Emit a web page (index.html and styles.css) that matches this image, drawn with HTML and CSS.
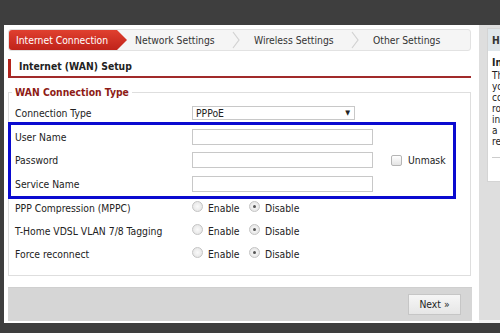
FILE: index.html
```html
<!DOCTYPE html>
<html lang="en">
<head>
<meta charset="UTF-8">
<title>Internet Connection</title>
<link rel="stylesheet" href="styles.css">
</head>
<body>
  <div class="window">
    <div class="main">
      <div class="steps">
        <span class="step active">Internet Connection</span>
        <span class="step">Network Settings</span>
        <svg class="chev" width="10" height="20" viewBox="0 0 10 20"><polyline points="2,2 8,10 2,18" fill="none" stroke="#d2d2d2" stroke-width="1.2"/></svg>
        <span class="step">Wireless Settings</span>
        <svg class="chev" width="10" height="20" viewBox="0 0 10 20"><polyline points="2,2 8,10 2,18" fill="none" stroke="#d2d2d2" stroke-width="1.2"/></svg>
        <span class="step">Other Settings</span>
      </div>

      <h2 class="section-title">Internet (WAN) Setup</h2>

      <fieldset class="wan">
        <legend>WAN Connection Type</legend>
        <div class="row first">
          <label>Connection Type</label>
          <div class="select">PPPoE <span class="arrow">&#9660;</span></div>
        </div>
        <div class="highlight">
          <div class="row">
            <label>User Name</label>
            <input type="text">
          </div>
          <div class="row">
            <label>Password</label>
            <input type="text">
            <span class="check"><span class="box"></span>Unmask</span>
          </div>
          <div class="row">
            <label>Service Name</label>
            <input type="text">
          </div>
        </div>
        <div class="row after">
          <label>PPP Compression (MPPC)</label>
          <span class="radio"><span class="dot"></span>Enable</span>
          <span class="radio"><span class="dot on"></span>Disable</span>
        </div>
        <div class="row">
          <label>T-Home VDSL VLAN 7/8 Tagging</label>
          <span class="radio"><span class="dot"></span>Enable</span>
          <span class="radio"><span class="dot on"></span>Disable</span>
        </div>
        <div class="row">
          <label>Force reconnect</label>
          <span class="radio"><span class="dot"></span>Enable</span>
          <span class="radio"><span class="dot on"></span>Disable</span>
        </div>
      </fieldset>

      <div class="actions">
        <button class="next">Next &raquo;</button>
      </div>
    </div>

    <div class="side">
      <div class="help">
        <div class="help-head">Help</div>
        <div class="help-body">
          <b>Internet</b>
          <p>This page allows<br>you to set up the<br>connection between<br>router and the<br>internet. Choose<br>a type and enter<br>required details.</p>
          <hr>
        </div>
      </div>
    </div>
  </div>
</body>
</html>
```

FILE: styles.css
```css
body {
  margin: 0;
  width: 500px;
  height: 333px;
  overflow: hidden;
  background: #3e3e3e;
  font-family: "DejaVu Sans Condensed", "Liberation Sans", sans-serif;
  font-size: 10.3px;
  color: #222;
}
.window {
  display: flex;
  margin: 25px 0 0 4px;
  height: 298px;
}
.main {
  width: 463px;
  padding: 4px 8px 0 4px;
  background: #fff;
  display: flex;
  flex-direction: column;
  flex-shrink: 0;
}
.steps {
  height: 22px;
  display: flex;
  align-items: center;
  background: #f5f5f5;
  border: 1px solid #e2e2e2;
  border-radius: 3px;
  box-sizing: border-box;
}
.step {
  color: #333;
  padding: 0 0 0 7px;
  width: 94px;
}
.step.active {
  background: linear-gradient(#e0402f, #c0231a);
  color: #fff;
  width: 112px;
  height: 20px;
  line-height: 20px;
  padding: 0 0 0 7px;
  border-radius: 3px 0 0 3px;
  clip-path: polygon(0 0, 108px 0, 118px 10px, 108px 20px, 0 20px);
}
.chev {
  margin: 0 6px 0 2px;
}
.section-title {
  margin: 8px 0 0 0;
  padding: 0 0 3px 8px;
  font-size: 10.3px;
  font-weight: bold;
  color: #222;
  border-left: 3px solid #b3241c;
  line-height: 14px;
}
.section-title::after {
  content: "";
  display: block;
  height: 2px;
  background: #a12a2a;
  margin: 0 0 0 -11px;
  position: relative;
  top: 3px;
}
.wan {
  margin: 8px 0 0 0;
  padding: 6px 0 9px 0;
  border: 1px solid #dedede;
  width: 463px;
  box-sizing: border-box;
}
.wan legend {
  color: #8e1b16;
  font-weight: bold;
  padding: 0 3px;
  margin-left: 3px;
}
.row {
  display: flex;
  align-items: center;
  height: 23px;
  padding-left: 6px;
}
.row.first {
  height: 18px;
}
.row.after {
  margin-top: -2px;
}
.row label {
  width: 177px;
}
.select {
  width: 163px;
  height: 14px;
  border: 1px solid #c8c8c8;
  padding-left: 3px;
  box-sizing: border-box;
  display: flex;
  align-items: center;
  justify-content: space-between;
  line-height: 12px;
}
.select .arrow {
  font-size: 7px;
  margin-right: 4px;
}
.highlight {
  border: 3px solid #0a0ad0;
  margin: 0 14px 0 -1px;
  padding: 0;
}
.highlight .row {
  height: 23.5px;
  padding-left: 4px;
}
.row input {
  width: 181px;
  height: 16px;
  border: 1px solid #c8c8c8;
  box-sizing: border-box;
  margin: 0;
}
.check {
  display: flex;
  align-items: center;
  margin-left: 18px;
}
.box {
  width: 9px;
  height: 9px;
  border: 1px solid #b5b5b5;
  border-radius: 2px;
  background: linear-gradient(#fff, #e4e4e4);
  margin-right: 6px;
}
.radio {
  display: flex;
  align-items: center;
  width: 59px;
}
.radio:first-of-type {
  width: 57px;
}
.dot {
  width: 9px;
  height: 9px;
  border-radius: 50%;
  border: 1px solid #c4c4c4;
  background: radial-gradient(#fafafa, #e0e0e0);
  margin-right: 5px;
  position: relative;
  top: -2px;
}
.dot.on::after {
  content: "";
  position: absolute;
  left: 3px;
  top: 3px;
  width: 3px;
  height: 3px;
  border-radius: 50%;
  background: #555;
}
.actions {
  margin-top: 11px;
  height: 34px;
  background: #d6d6d6;
  border-top: 1px solid #cfcfcf;
  width: 464px;
  display: flex;
  align-items: center;
  justify-content: flex-end;
  padding-right: 11px;
  box-sizing: border-box;
}
.next {
  width: 53px;
  height: 21px;
  border: 1px solid #c6c6c6;
  background: linear-gradient(#f6f6f6, #e6e6e6);
  font-family: "DejaVu Sans Condensed", "Liberation Sans", sans-serif;
  font-size: 10.3px;
  color: #222;
  padding: 0;
}
.side {
  flex: 1;
  background: #dedede;
  padding: 3px 0 3px 8px;
  overflow: hidden;
  border-bottom: 3px solid #f4f4f4;
}
.help {
  width: 120px;
  background: #fff;
  border: 1px solid #d4d4d4;
  height: 152px;
}
.help-head {
  background: #dfe6ea;
  height: 22px;
  line-height: 22px;
  padding-left: 4px;
  font-weight: bold;
  color: #333;
}
.help-body {
  padding: 6px 4px;
  line-height: 11px;
  color: #222;
}
.help-body p {
  margin: 2px 0 0 0;
  font-size: 10px;
}
.help-body hr {
  border: 0;
  border-top: 1px solid #ccc;
  margin: 10px 0 0 0;
}
```
